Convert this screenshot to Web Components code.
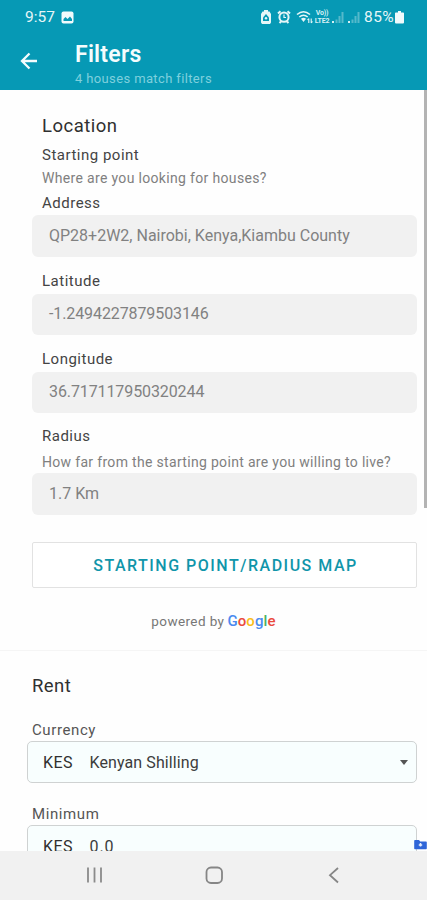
<!DOCTYPE html>
<html lang="en">
<head>
<meta charset="utf-8">
<title>Filters</title>
<style>
  body {
    margin: 0;
    font-family: Roboto, "Liberation Sans", sans-serif;
    color: #444;
    background: #fefefe;
  }
</style>
</head>
<body>
<filters-screen></filters-screen>

<script>
class StatusBar extends HTMLElement {
  constructor() {
    super();
    this.attachShadow({ mode: "open" });
  }

  connectedCallback() {
    this.shadowRoot.innerHTML = `
      <style>
        :host {
          display: flex;
          align-items: center;
          height: 34px;
          padding: 0 23px 0 25px;
          box-sizing: border-box;
          color: #e6f6f8;
          font-size: 15.5px;
          line-height: 34px;
        }
        svg { display: block; flex: none; }
        .photo { margin-left: 6px; }
        .right { display: flex; align-items: center; margin-left: auto; }
        .volte {
          display: grid;
          justify-items: center;
          font-size: 7px;
          line-height: 8px;
          font-weight: 700;
          letter-spacing: -0.2px;
          width: 18px;
          color: #d5f0f4;
        }
        .percent { margin-left: 4px; font-size: 15.5px; letter-spacing: 0.4px; }
      </style>
      <span>9:57</span>
      <svg class="photo" width="13" height="13" viewBox="0 0 13 13">
        <rect x=".5" y=".5" width="12" height="12" rx="2" fill="#f0fafc"/>
        <path d="M2.5 10V8l2-2 2 2L9 5.5l2 2.5V10z" fill="#0699b5"/>
      </svg>
      <div class="right">
        <svg width="10" height="14" viewBox="0 0 10 14">
          <path d="M3 0h4v1.5h1.5L10 4v8.5L9 14H1l-1-1.5V4l1.5-2.5H3z" fill="#e6f6f8"/>
          <path d="M5 4 8 7.5V11H2V7.5z" fill="#0699b5"/>
          <circle cx="5" cy="8.3" r="1.2" fill="#e6f6f8"/>
        </svg>
        <svg width="14" height="14" viewBox="0 0 14 14" style="margin-left:6px">
          <path d="M1 3.5 3.5 1.2M13 3.5 10.5 1.2M2.5 13 4 11.5M11.5 13 10 11.5" stroke="#e6f6f8" stroke-width="2"/>
          <circle cx="7" cy="7.2" r="4.6" fill="#0699b5" stroke="#e6f6f8" stroke-width="2"/>
          <path d="M7 4.5v3h2" fill="none" stroke="#e6f6f8" stroke-width="1.2"/>
        </svg>
        <svg width="17" height="14" viewBox="0 0 17 14" style="margin-left:5px">
          <g fill="none" stroke="#e6f6f8" stroke-width="1.6">
            <path d="M1 4.5q6.5-5.5 13 0M3.300 7q4.200-3.500 8.400 0"/>
            <path d="M12.8 8.5V13m0-4.500-1.300 1.500M15.2 8.500V13m0 0 1.300-1.500" stroke-width="1.1"/>
          </g>
          <path d="M5 8.8q2.500-1.900 5 0L7.500 12z" fill="#e6f6f8"/>
        </svg>
        <div class="volte"><span>Vo))</span><span>LTE2</span></div>
        <svg width="29" height="14" viewBox="0 0 29 14">
          <g fill="#d5eff3">
            <rect x="1" y="11" width="2" height="2"/>
            <rect x="17" y="11" width="2" height="2"/>
          </g>
          <g fill="#55b9cb">
            <path d="M4.500 9.500h2V13h-2zM7.500 6h2v7h-2zM10.500 2h2v11h-2z"/>
            <path d="M20.500 9.500h2V13h-2zM23.500 6h2v7h-2zM26.500 2h2v11h-2z"/>
          </g>
        </svg>
        <span class="percent">85%</span>
        <svg width="9" height="13" viewBox="0 0 9 13" style="margin-left:1px">
          <path d="M3 0h3v1.500h2.200a.8.8 0 0 1 .8.8v9.200a1 1 0 0 1-1 1H1a1 1 0 0 1-1-1V2.300a.8.8 0 0 1 .8-.8H3z" fill="#f0fafc"/>
        </svg>
      </div>
    `;
  }
}

class AppBar extends HTMLElement {
  constructor() {
    super();
    this.attachShadow({ mode: "open" });
  }

  connectedCallback() {
    this.shadowRoot.innerHTML = `
      <style>
        :host {
          display: flex;
          height: 56px;
          padding: 0 20px;
          box-sizing: border-box;
          color: #f4fcfd;
        }
        svg { display: block; margin-top: 18px; }
        .titles { margin-left: 37px; padding-top: 7px; }
        h1 {
          margin: 0;
          font-size: 23px;
          line-height: 28px;
          font-weight: 600;
          letter-spacing: 0.25px;
        }
        p {
          margin: 0;
          font-size: 13px;
          line-height: 20px;
          letter-spacing: 0.37px;
          color: #7fd0dd;
        }
      </style>
      <svg width="18" height="18" viewBox="0 0 18 18">
        <path d="M17 9H2.5M9.5 1.5 2 9l7.500 7.500" fill="none" stroke="#f4fcfd" stroke-width="2.3"/>
      </svg>
      <div class="titles">
        <h1><slot></slot></h1>
        <p><slot name="subtitle"></slot></p>
      </div>
    `;
  }
}

// label + optional hint + read only grey value box
class ReadonlyField extends HTMLElement {
  constructor() {
    super();
    this.attachShadow({ mode: "open" });
  }

  connectedCallback() {
    const hint = this.getAttribute("hint");
    this.shadowRoot.innerHTML = `
      <style>
        :host { display: block; }
        .label {
          padding-left: 10px;
          font-size: 15px;
          line-height: 22px;
          letter-spacing: 0.5px;
        }
        .hint {
          padding: 5px 0 1px 10px;
          font-size: 14px;
          line-height: 20px;
          letter-spacing: 0.32px;
          color: #808080;
          white-space: nowrap;
        }
        .value {
          height: var(--value-height, 41px);
          margin-top: var(--value-gap, 2px);
          padding-left: 17px;
          border-radius: 6px;
          background: #f1f1f1;
          color: #818181;
          font-size: 16px;
          line-height: var(--value-line, 40px);
          letter-spacing: var(--value-spacing, 0);
          white-space: nowrap;
        }
      </style>
      <div class="label">${this.getAttribute("label")}</div>
      ${hint ? `<div class="hint">${hint}</div>` : ""}
      <div class="value"><slot></slot></div>
    `;
  }
}

class OutlineButton extends HTMLElement {
  constructor() {
    super();
    this.attachShadow({ mode: "open" });
  }

  connectedCallback() {
    this.shadowRoot.innerHTML = `
      <style>
        :host { display: block; }
        button {
          display: block;
          width: 100%;
          height: 46px;
          padding: 0 0 0 2px;
          border: 1px solid #e2e2e2;
          border-radius: 2px;
          background: #fff;
          color: #1095aa;
          font: 500 16px Roboto, "Liberation Sans", sans-serif;
          letter-spacing: 1.5px;
        }
      </style>
      <button type="button"><slot></slot></button>
    `;
  }
}

class PoweredBy extends HTMLElement {
  constructor() {
    super();
    this.attachShadow({ mode: "open" });
  }

  connectedCallback() {
    this.shadowRoot.innerHTML = `
      <style>
        :host {
          display: flex;
          align-items: baseline;
          justify-content: center;
          height: 22px;
          font-size: 13.5px;
          line-height: 22px;
          letter-spacing: 0.4px;
          color: #777;
        }
        .logo {
          margin-left: 3px;
          font-size: 15px;
          font-weight: 500;
          letter-spacing: 0.1px;
        }
        .b { color: #4a8af0; }
        .r { color: #ea4a3d; }
        .y { color: #f9bd1c; }
        .g { color: #4cb263; }
      </style>
      <span>powered by</span>
      <span class="logo"><span class="b">G</span><span class="r">o</span><span class="y">o</span><span class="b">g</span><span class="g">l</span><span class="r">e</span></span>
    `;
  }
}

class MoneyField extends HTMLElement {
  constructor() {
    super();
    this.attachShadow({ mode: "open" });
  }

  connectedCallback() {
    const arrow = this.hasAttribute("dropdown");
    this.shadowRoot.innerHTML = `
      <style>
        :host { display: block; color: #3c3c3c; }
        .label {
          padding-left: 5px;
          font-size: 15px;
          line-height: 20px;
          letter-spacing: 0.6px;
          color: #555;
        }
        .box {
          display: flex;
          align-items: center;
          height: 42px;
          margin-top: 1px;
          padding: 0 8px 0 15px;
          box-sizing: border-box;
          border: 1px solid #cfd2d2;
          border-radius: 5px;
          background: #f8fefe;
          font-size: 16px;
          letter-spacing: var(--value-spacing, 0.1px);
        }
        .code { width: 46.5px; letter-spacing: 0.4px; color: #303030; }
        .arrow {
          margin-left: auto;
          border: 4.5px solid transparent;
          border-top: 5px solid #555;
          border-bottom: 0;
        }
      </style>
      <div class="label">${this.getAttribute("label")}</div>
      <div class="box">
        <span class="code">${this.getAttribute("code")}</span>
        <slot></slot>
        ${arrow ? '<span class="arrow"></span>' : ""}
      </div>
    `;
  }
}

class NavBar extends HTMLElement {
  constructor() {
    super();
    this.attachShadow({ mode: "open" });
  }

  connectedCallback() {
    this.shadowRoot.innerHTML = `
      <style>
        :host {
          display: flex;
          justify-content: center;
          gap: 100px;
          height: 49px;
          padding-top: 14px;
          box-sizing: border-box;
          background: #f1f1f1;
        }
        svg { display: block; }
      </style>
      <svg width="20" height="20" viewBox="0 0 20 20">
        <path d="M4 2.500v15M10.500 2.500v15M17 2.500v15" stroke="#8b8b8b" stroke-width="1.8"/>
      </svg>
      <svg width="20" height="20" viewBox="0 0 20 20">
        <rect x="2.5" y="2.5" width="15.5" height="15.5" rx="4.5" fill="none" stroke="#868686" stroke-width="1.8"/>
      </svg>
      <svg width="20" height="20" viewBox="0 0 20 20">
        <path d="M14 3 6 10.200l8 7.300" fill="none" stroke="#868686" stroke-width="1.8"/>
      </svg>
    `;
  }
}

class FiltersScreen extends HTMLElement {
  constructor() {
    super();
    this.attachShadow({ mode: "open" });
  }

  connectedCallback() {
    this.shadowRoot.innerHTML = `
      <style>
        :host {
          display: flex;
          flex-direction: column;
          height: 900px;
          overflow: hidden;
        }
        header { flex: none; background: #0699b5; }
        main {
          position: relative;
          flex: 1;
          min-height: 0;
          overflow: hidden;
        }
        nav-bar { flex: none; }
        .location { padding: 24px 10px 0 32px; }
        h2 {
          margin: 0;
          font-size: 18.5px;
          line-height: 24px;
          font-weight: 400;
          letter-spacing: 0.5px;
          color: #303030;
        }
        .intro { padding-left: 10px; }
        .intro div {
          margin-top: 6px;
          font-size: 15px;
          line-height: 22px;
          letter-spacing: 0.5px;
        }
        .intro p {
          margin: 1px 0 0;
          font-size: 14px;
          line-height: 22px;
          letter-spacing: 0.33px;
          color: #808080;
        }
        .address {
          margin-top: 3px;
          --value-height: 42px;
          --value-line: 42px;
          --value-gap: 1px;
        }
        .lat, .lng {
          margin-top: 13px;
          --value-spacing: -0.1px;
        }
        .radius {
          margin-top: 12px;
          --value-height: 42px;
          --value-line: 42px;
          --value-gap: 0px;
        }
        outline-button { margin-top: 27px; }
        powered-by { margin-top: 22px; padding-right: 22px; }
        .rent {
          margin-top: 18px;
          padding: 23px 10px 0 27px;
          border-top: 1px solid #f5f5f5;
        }
        .rent h2 { padding-left: 5px; letter-spacing: 0.4px; }
        .currency { margin-top: 22px; }
        .minimum { margin-top: 21px; --value-spacing: 0.9px; }
        .scrollbar {
          position: absolute;
          top: 0;
          right: 0;
          width: 3px;
          height: 418px;
          background: #b3b3b3;
        }
        .badge {
          position: absolute;
          right: 0;
          bottom: 1px;
        }
      </style>
      <header>
        <status-bar></status-bar>
        <app-bar>Filters<span slot="subtitle">4 houses match filters</span></app-bar>
      </header>
      <main>
        <section class="location">
          <div class="intro">
            <h2>Location</h2>
            <div>Starting point</div>
            <p>Where are you looking for houses?</p>
          </div>
          <readonly-field class="address" label="Address">QP28+2W2, Nairobi, Kenya,Kiambu County</readonly-field>
          <readonly-field class="lat" label="Latitude">-1.2494227879503146</readonly-field>
          <readonly-field class="lng" label="Longitude">36.717117950320244</readonly-field>
          <readonly-field class="radius" label="Radius" hint="How far from the starting point are you willing to live?">1.7 Km</readonly-field>
          <outline-button>STARTING POINT/RADIUS MAP</outline-button>
          <powered-by></powered-by>
        </section>
        <section class="rent">
          <h2>Rent</h2>
          <money-field class="currency" label="Currency" code="KES" dropdown>Kenyan Shilling</money-field>
          <money-field class="minimum" label="Minimum" code="KES">0.0</money-field>
        </section>
        <div class="scrollbar"></div>
        <svg class="badge" width="13" height="11" viewBox="0 0 13 11">
          <path d="M1 1h4l1.200 1.500H12q.8 0 .8.8V9.500q0 .8-.8.8H1Q.2 10.300.2 9.500V1.800Q.2 1 1 1z" fill="#2f66d8"/>
          <path d="M6.500 4v3.500M4.800 6h3.400" stroke="#e4ecfc" stroke-width="1.5"/>
        </svg>
      </main>
      <nav-bar></nav-bar>
    `;
  }
}

customElements.define("status-bar", StatusBar);
customElements.define("app-bar", AppBar);
customElements.define("readonly-field", ReadonlyField);
customElements.define("outline-button", OutlineButton);
customElements.define("powered-by", PoweredBy);
customElements.define("money-field", MoneyField);
customElements.define("nav-bar", NavBar);
customElements.define("filters-screen", FiltersScreen);
</script>
</body>
</html>
